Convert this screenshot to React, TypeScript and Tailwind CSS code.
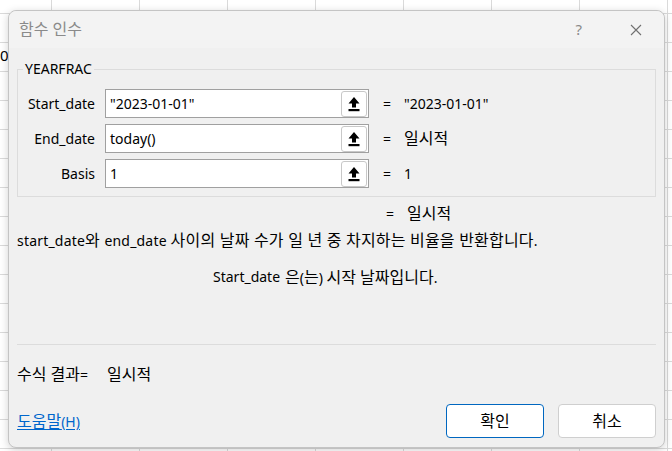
import React from 'react'

const font = { fontFamily: '"Noto Sans", "Noto Sans CJK KR", sans-serif' }

// hangul runs are set a bit larger so they take the width of the original font
function K({ children }: { children: string }) {
  const parts = children.split(/([\uAC00-\uD7A3][\uAC00-\uD7A3 ]*)/)
  return (
    <>
      {parts.map((p, i) =>
        /[\uAC00-\uD7A3]/.test(p) ? (
          <span key={i} className="text-[16px] leading-[20px]">{p}</span>
        ) : (
          <span key={i}>{p}</span>
        )
      )}
    </>
  )
}

function RefIcon() {
  return (
    <svg width="12" height="16" viewBox="0 0 12 16">
      <path d="M6 1 L11.5 7.5 L8 7.5 L8 11.5 L4 11.5 L4 7.5 L0.5 7.5 Z" fill="#000" />
      <rect x="0.5" y="13" width="11" height="2.2" fill="#000" />
    </svg>
  )
}

type Arg = { label: string; value: string; result: string }

const args: Arg[] = [
  { label: 'Start_date', value: '"2023-01-01"', result: '"2023-01-01"' },
  { label: 'End_date', value: 'today()', result: '일시적' },
  { label: 'Basis', value: '1', result: '1' },
]

function ArgRow({ a }: { a: Arg }) {
  return (
    <div className="flex h-[29px] items-center">
      <div className="w-[80px] pr-[10px] text-right">{a.label}</div>
      <div className="flex h-[29px] w-[264px] items-center border border-[#a0a0a0] bg-white">
        <div className="flex-1 pl-[4px] leading-none">{a.value}</div>
        <div className="mr-[1px] flex h-[26px] w-[26px] items-center justify-center rounded-[3px] border border-[#c8c8c8] bg-white">
          <RefIcon />
        </div>
      </div>
      <div className="ml-[14px] w-[21px]">=</div>
      <div><K>{a.result}</K></div>
    </div>
  )
}

export default function App() {
  return (
    <div
      className="relative h-[451px] w-[672px] overflow-hidden bg-white bg-[linear-gradient(to_right,#dadada_1px,transparent_1px),linear-gradient(to_bottom,#dadada_1px,transparent_1px)] bg-[size:88px_29px] bg-[position:51px_13px] text-[14px] text-black"
      style={font}
    >
      <div className="absolute left-0 top-[48px] text-[15px] leading-none">0</div>
      <div className="absolute left-[8px] top-[10px] flex h-[438px] w-[657px] flex-col rounded-[8px] border border-[#c4c4c4] bg-[#f0f0f0] shadow-[0_2px_8px_rgba(0,0,0,0.18)]">
        <div className="flex h-[37px] items-center rounded-t-[8px] bg-[#f3f3f3] pl-[10px] pr-[22px]">
          <div className="flex-1 text-[#8a8a8a]"><K>함수 인수</K></div>
          <div className="mr-[48px] text-[15px] text-[#8a8a8a]">?</div>
          <svg width="12" height="12" viewBox="0 0 12 12">
            <path d="M1 1 L11 11 M11 1 L1 11" stroke="#707070" strokeWidth="1.1" />
          </svg>
        </div>

        <div className="flex flex-1 flex-col px-[8px]">
          <div className="relative mt-[21px] h-[128px] border border-[#dcdcdc] pt-[19px] pl-[7px]">
            <div className="absolute -top-[11px] left-[5px] bg-[#f0f0f0] px-[2px] leading-[20px]">YEARFRAC</div>
            <div className="flex flex-col gap-[6px]">
              {args.map((a) => (
                <ArgRow key={a.label} a={a} />
              ))}
            </div>
          </div>

          <div className="mt-[6px] flex h-[20px] items-center pl-[369px]">
            <span className="w-[21px]">=</span>
            <K>일시적</K>
          </div>
          <div className="mt-[7px] h-[20px] leading-[20px] tracking-[0.2px]">
            <K>start_date와 end_date 사이의 날짜 수가 일 년 중 차지하는 비율을 반환합니다.</K>
          </div>
          <div className="mt-[17px] flex h-[20px] leading-[20px]">
            <span className="ml-[196px] w-[72px]">Start_date</span>
            <span><K>은(는) 시작 날짜입니다.</K></span>
          </div>

          <div className="mt-[57px] h-px bg-[#dcdcdc]" />

          <div className="mt-[19px] flex h-[20px] leading-[20px]">
            <span className="w-[90px]"><K>수식 결과=</K></span>
            <K>일시적</K>
          </div>

          <div className="mt-[20px] flex items-center">
            <a className="flex-1 text-[#0066cc] underline underline-offset-2"><K>도움말(H)</K></a>
            <button className="mr-[14px] h-[34px] w-[98px] rounded-[4px] border border-[#0067c0] bg-white"><K>확인</K></button>
            <button className="h-[34px] w-[98px] rounded-[4px] border border-[#cfcfcf] bg-white"><K>취소</K></button>
          </div>
        </div>
      </div>
    </div>
  )
}
